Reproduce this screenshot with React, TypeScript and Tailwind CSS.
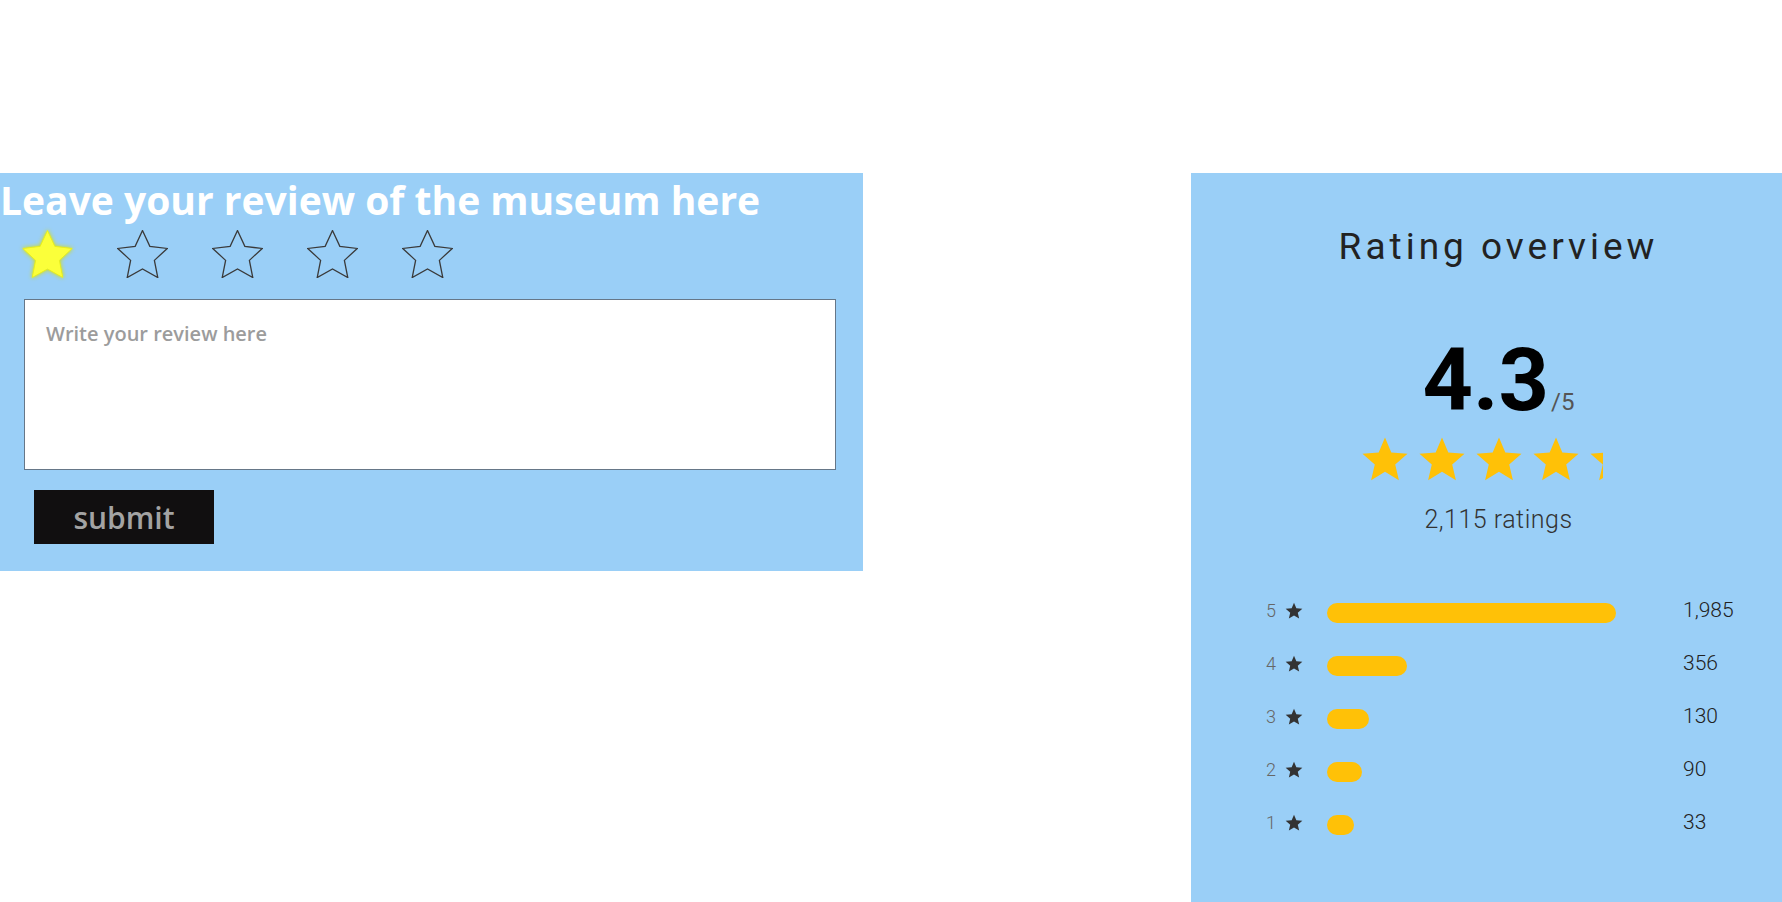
import React from "react";

const STAR_PATH =
  "M12 17.27L18.18 21l-1.64-7.03L22 9.24l-7.19-.61L12 2 9.19 8.63 2 9.24l5.46 4.73L5.82 21z";

// five point star for the review picker, drawn into a 51x48 box
function starPoints(cx: number, cy: number, R: number, r: number) {
  const pts: string[] = [];
  for (let i = 0; i < 10; i++) {
    const rad = i % 2 === 0 ? R : r;
    const a = (-90 + i * 36) * (Math.PI / 180);
    pts.push(`${(cx + rad * Math.cos(a)).toFixed(2)},${(cy + rad * Math.sin(a)).toFixed(2)}`);
  }
  return pts.join(" ");
}

const PICK = starPoints(25.5, 26.5, 26, 12.5);

function PickStar({ on }: { on: boolean }) {
  return (
    <svg width="51" height="48" viewBox="0 0 51 48" className={on ? "drop-shadow-[0_0_2px_#d8e000]" : ""}>
      <polygon
        points={PICK}
        fill={on ? "#fbff3a" : "none"}
        stroke={on ? "#e8ee20" : "#3a3a3a"}
        strokeWidth={on ? 1 : 1.3}
        strokeLinejoin="miter"
      />
    </svg>
  );
}

function Star({ size, color }: { size: number; color: string }) {
  return (
    <svg width={size} height={size} viewBox="0 0 24 24" className="shrink-0">
      <path d={STAR_PATH} fill={color} />
    </svg>
  );
}

const rows = [
  { n: 5, w: 289, count: "1,985" },
  { n: 4, w: 80, count: "356" },
  { n: 3, w: 42, count: "130" },
  { n: 2, w: 35, count: "90" },
  { n: 1, w: 27, count: "33" },
];

export default function App() {
  return (
    <div className="min-h-screen w-full bg-white flex items-start pt-[173px]">
      {/* review form */}
      <div className="w-[863px] bg-[#9acff7] pb-[27px] font-['Open_Sans',sans-serif]">
        <h1 className="pt-[3px] text-white font-bold text-[39px] leading-[48px]">
          Leave your review of the museum here
        </h1>
        <div className="flex gap-[44px] pl-[22px] mt-[6px]">
          {[0, 1, 2, 3, 4].map((i) => (
            <PickStar key={i} on={i === 0} />
          ))}
        </div>
        <textarea
          placeholder="Write your review here"
          className="block ml-[24px] mt-[21px] w-[812px] h-[171px] bg-white border border-[#667788] pt-[19px] pl-[21px] text-[20px] font-semibold resize-none outline-none placeholder:text-[#9c9c9c]"
        />
        <button className="ml-[34px] mt-[20px] w-[180px] h-[54px] bg-[#110f10] text-[#a3a3a3] text-[30px] font-semibold flex items-center justify-center">
          submit
        </button>
      </div>

      {/* rating overview */}
      <div className="ml-auto w-[591px] min-h-[729px] bg-[#9acff7] font-['Roboto',sans-serif]">
        <div className="pl-[24px] text-center">
          <h2 className="mt-[52px] text-[37px] leading-[44px] font-normal tracking-[4px] text-[#222]">
            Rating overview
          </h2>
          <div className="mt-[67px] h-[88px] flex justify-center items-baseline text-black">
            <span className="text-[88px] leading-[88px] font-bold">4.3</span>
            <span className="text-[24px] leading-none text-[#555] ml-[2px]">/5</span>
          </div>
          <div className="mt-[9px] mx-auto w-[282px]">
            <div className="w-[245px] overflow-hidden">
              <div className="flex gap-[3px] w-[282px]">
                {[0, 1, 2, 3, 4].map((i) => (
                  <Star key={i} size={54} color="#ffc107" />
                ))}
              </div>
            </div>
          </div>
          <div className="mt-[18px] text-[25px] leading-[30px] font-light tracking-[0.5px] text-[#333]">
            2,115 ratings
          </div>
        </div>

        <div className="mt-[49px] ml-[65px] flex flex-col">
          {rows.map((r) => (
            <div key={r.n} className="h-[53px] flex items-center">
              <span className="w-[20px] text-right text-[18px] font-light text-[#666]">{r.n}</span>
              <span className="ml-[8px]">
                <Star size={20} color="#333" />
              </span>
              <div className="ml-[23px] w-[308px] h-[20px] mt-[5px]">
                <div className="h-full rounded-full bg-[#ffc107]" style={{ width: r.w }} />
              </div>
              <span className="ml-[48px] text-[21px] font-light text-[#222]">{r.count}</span>
            </div>
          ))}
        </div>
      </div>
    </div>
  );
}
